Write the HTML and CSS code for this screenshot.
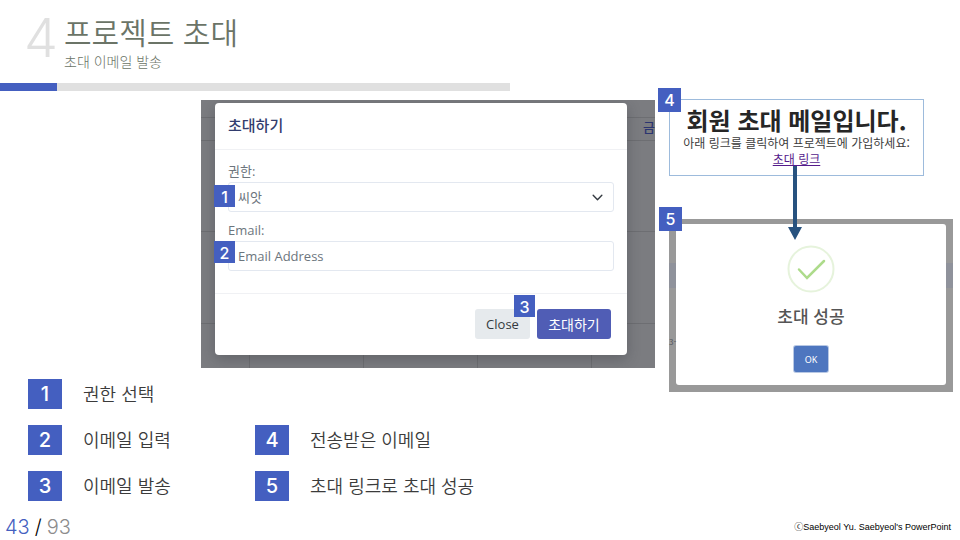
FILE: index.html
```html
<!DOCTYPE html>
<html lang="ko">
<head>
<meta charset="utf-8">
<title>프로젝트 초대</title>
<link rel="stylesheet" href="styles.css">
</head>
<body>
<div class="slide">
  <header class="head">
    <span class="head-num">4</span>
    <div class="head-text">
      <h1>프로젝트 초대</h1>
      <p>초대 이메일 발송</p>
    </div>
  </header>
  <div class="bar"><div class="bar-fill"></div></div>

  <main class="figures">
    <section class="shot">
      <span class="day">금</span>
      <form class="modal">
        <h2>초대하기</h2>
        <div class="modal-body">
          <label for="role">권한:</label>
          <div class="field">
            <select id="role"><option>씨앗</option></select>
            <svg class="chevron" viewBox="0 0 12 12"><path d="M2 4l4 4 4-4" fill="none" stroke="#343a40" stroke-width="1.3" stroke-linecap="round" stroke-linejoin="round"/></svg>
            <span class="badge badge-1">1</span>
          </div>
          <label for="email">Email:</label>
          <div class="field">
            <input id="email" type="email" placeholder="Email Address">
            <span class="badge badge-2">2</span>
          </div>
        </div>
        <div class="modal-foot">
          <button type="button" class="btn close">Close</button>
          <button type="button" class="btn invite">초대하기</button>
          <span class="badge badge-3">3</span>
        </div>
      </form>
    </section>

    <div class="side">
      <section class="mail">
        <span class="badge badge-lg badge-4">4</span>
        <h2>회원 초대 메일입니다.</h2>
        <p>아래 링크를 클릭하여 프로젝트에 가입하세요:</p>
        <a href="#done">초대 링크</a>
        <svg class="arrow" viewBox="0 0 14 74"><path d="M5 0h4v61h5L7 74 0 61h5z" fill="#27527f"/></svg>
      </section>
      <section class="done" id="done">
        <span class="badge badge-lg badge-5">5</span>
        <span class="date">3-</span>
        <div class="alert">
          <svg class="check" viewBox="0 0 48 48"><circle cx="24" cy="24" r="22.5" fill="none" stroke="#e6f3dc" stroke-width="2"/><path d="M12 24.500l8 8.500L37 16" fill="none" stroke="#addb8b" stroke-width="2.500" stroke-linecap="round"/></svg>
          <h2>초대 성공</h2>
          <button type="button" class="ok">OK</button>
        </div>
      </section>
    </div>
  </main>

  <div class="legend">
    <ol class="list">
      <li><b>1</b>권한 선택</li>
      <li><b>2</b>이메일 입력</li>
      <li><b>3</b>이메일 발송</li>
    </ol>
    <ol class="list">
      <li><b>4</b>전송받은 이메일</li>
      <li><b>5</b>초대 링크로 초대 성공</li>
    </ol>
  </div>

  <footer class="foot">
    <p class="page"><span class="now">43</span><span class="slash">/</span><span class="total">93</span></p>
    <p class="credit">ⓒSaebyeol Yu. Saebyeol's PowerPoint</p>
  </footer>
</div>
</body>
</html>
```
FILE: styles.css
```css
* { box-sizing: border-box; }

body, h1, h2, p, ol { margin: 0; padding: 0; }

body {
  background: #fff;
  color: #3b3b3b;
  font-family: "Noto Sans CJK KR", sans-serif;
}

.slide {
  display: flex;
  flex-direction: column;
  min-height: 100vh;
}

/* Heading */
.head {
  display: flex;
  gap: 8px;
  height: 83px;
  padding: 8px 24px 0;
}
.head-num {
  width: 32px;
  color: #e0e0e0;
  font: 300 54px/60px Inter, sans-serif;
}
.head-text { padding-top: 4px; }
.head h1 {
  color: #6b7467;
  font-size: 30px;
  font-weight: 350;
  line-height: 38px;
}
.head p {
  color: #6b7467;
  font-size: 14px;
  font-weight: 300;
  line-height: 22px;
}
.bar {
  width: 53.1%;
  height: 8px;
  background: #e0e0e0;
}
.bar-fill {
  width: 11.1%;
  height: 8px;
  background: #445fc0;
}

/* Badges */
.badge {
  position: absolute;
  width: 21px;
  height: 22px;
  background: #445fc0;
  color: #fff;
  font: 500 16px/24px Inter, sans-serif;
  text-align: center;
}
.badge-lg { width: 23px; height: 24px; }
.badge-1 { left: -14px; top: 3px; }
.badge-2 { left: -14px; top: 0; }
.badge-3 { right: 92px; top: 1px; }
.badge-4 { left: -12px; top: -12px; }
.badge-5 { left: -10px; top: -12px; }

/* Figures */
.figures {
  display: grid;
  grid-template-columns: 454fr 284fr;
  gap: 14px;
  padding: 8px 7px 0 201px;
}
.shot {
  position: relative;
  align-self: start;
  margin-top: 1px;
  padding: 3px 28px 13px 14px;
  overflow: hidden;
  background:
    linear-gradient(#6d6e72, #6d6e72) 0 17px / 100% 1px no-repeat,
    linear-gradient(#6d6e72, #6d6e72) 0 40px / 100% 1px no-repeat,
    linear-gradient(#6d6e72, #6d6e72) 0 131px / 100% 1px no-repeat,
    linear-gradient(#6d6e72, #6d6e72) 0 223px / 100% 1px no-repeat,
    repeating-linear-gradient(90deg, transparent 0 48px, #6d6e72 48px 49px, transparent 49px 114px) 0 100% / 100% 14px no-repeat,
    #7b7c80;
}
.day {
  position: absolute;
  right: 0;
  top: 17px;
  color: #2b3570;
  font-size: 13px;
  font-weight: 500;
  line-height: 20px;
}
.modal {
  position: relative;
  border-radius: 4px;
  background: #fff;
  box-shadow: 0 4px 14px rgba(40, 42, 50, .3);
  color: #6c757d;
  font-family: "Open Sans", "Noto Sans CJK KR", sans-serif;
  font-size: 13px;
}
.modal h2 {
  padding: 12px 13px 14px;
  border-bottom: 1px solid #f0f1f4;
  color: #323c6e;
  font-size: 15px;
  font-weight: 500;
  line-height: 20px;
}
.modal-body { padding: 11px 13px 22px; }
.modal label {
  display: block;
  height: 21px;
  line-height: 20px;
}
.field { position: relative; }
.field + label { margin-top: 8px; }
.field select,
.field input {
  display: block;
  width: 100%;
  height: 30px;
  padding: 0 9px;
  border: 1px solid #e3e8f0;
  border-radius: 3px;
  background: #fff;
  color: #6c757d;
  font: inherit;
  appearance: none;
}
.field input::placeholder { color: #6c757d; }
.chevron {
  position: absolute;
  right: 10px;
  top: 9px;
  width: 13px;
  height: 13px;
}
.modal-foot {
  position: relative;
  display: flex;
  justify-content: flex-end;
  gap: 7px;
  padding: 15px 16px 16px;
  border-top: 1px solid #f0f1f4;
}
.btn {
  height: 30px;
  padding: 0;
  border: 0;
  border-radius: 3px;
  font: inherit;
}
.close { width: 55px; background: #e6eaed; color: #343a40; }
.invite { width: 74px; background: #505db5; color: #fff; font-size: 14px; }

/* Mail and result */
.mail {
  position: relative;
  height: 77px;
  margin-right: 29px;
  padding-top: 6px;
  border: 1px solid #9dbbdc;
  text-align: center;
  font-size: 12px;
  line-height: 16px;
}
.mail h2 {
  color: #262626;
  font-size: 24px;
  font-weight: 700;
  line-height: 28px;
}
.mail p { margin-top: 1px; white-space: nowrap; }
.mail a { display: inline-block; color: #551a8b; }
.arrow {
  position: absolute;
  z-index: 2;
  left: 118px;
  top: 66px;
  width: 14px;
  height: 74px;
}
.done {
  position: relative;
  margin-top: 43px;
  padding: 5px 7px 7px;
  background: linear-gradient(#999 44px, #8f929b 44px 69px, #999 69px);
}
.date {
  position: absolute;
  left: 0;
  top: 118px;
  color: #54575c;
  font-size: 8px;
  line-height: 10px;
}
.alert {
  display: flex;
  flex-direction: column;
  align-items: center;
  padding: 21px 0 13px;
  border-radius: 3px;
  background: #fff;
}
.check { width: 48px; height: 48px; }
.alert h2 {
  margin-top: 10px;
  color: #555;
  font-size: 17px;
  font-weight: 500;
  line-height: 26px;
}
.ok {
  width: 34px;
  height: 26px;
  margin-top: 17px;
  padding: 0;
  border: 0;
  border-radius: 2px;
  background: #4e76bf;
  box-shadow: 0 0 0 1px #b8c8e4;
  color: #fff;
  font: 9px "Noto Sans", sans-serif;
}
.badge-5 { z-index: 1; }

/* Legend */
.legend {
  display: grid;
  grid-template-columns: 227px 1fr;
  align-items: end;
  margin-top: -13px;
  padding-left: 28px;
}
.list {
  display: grid;
  gap: 16px;
  list-style: none;
}
.list li {
  display: flex;
  gap: 21px;
  font-size: 18px;
  font-weight: 350;
  line-height: 28px;
}
.list b {
  width: 34px;
  height: 30px;
  background: #445fc0;
  color: #fff;
  font: 500 20px/31px Inter, sans-serif;
  text-align: center;
}

/* Footer */
.foot {
  display: flex;
  align-items: center;
  justify-content: space-between;
  margin-top: auto;
  padding: 0 9px 0 5px;
}
.page {
  display: flex;
  gap: 5px;
  color: #8c8c8c;
  font: 300 20px/26px Inter, sans-serif;
}
.now { color: #445fc0; }
.slash { color: #000; }
.credit {
  color: #000;
  font: 9px/12px "Liberation Sans", "Noto Sans CJK KR", sans-serif;
}
```
